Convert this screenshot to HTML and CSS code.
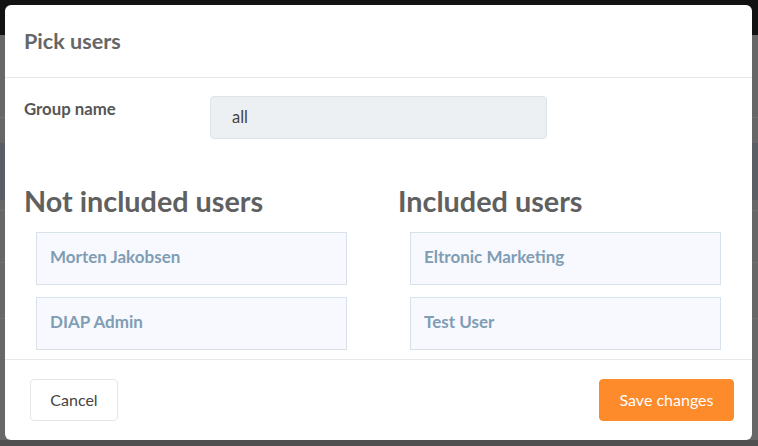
FILE: index.html
```html
<!DOCTYPE html>
<html lang="en">
<head>
<meta charset="utf-8">
<title>Pick users</title>
<link rel="stylesheet" href="styles.css">
</head>
<body>
<div class="backdrop"></div>
<div class="modal">
  <div class="modal-header">
    <h5 class="modal-title">Pick users</h5>
  </div>
  <div class="modal-body">
    <div class="form-row">
      <label class="form-label">Group name</label>
      <div class="form-input">all</div>
    </div>
    <div class="lists">
      <div class="list-col">
        <h2 class="list-title">Not included users</h2>
        <div class="list">
          <div class="user-card">Morten Jakobsen</div>
          <div class="user-card">DIAP Admin</div>
        </div>
      </div>
      <div class="list-col">
        <h2 class="list-title">Included users</h2>
        <div class="list">
          <div class="user-card">Eltronic Marketing</div>
          <div class="user-card">Test User</div>
        </div>
      </div>
    </div>
  </div>
  <div class="modal-footer">
    <button class="btn btn-light">Cancel</button>
    <button class="btn btn-primary">Save changes</button>
  </div>
</div>
</body>
</html>
```

FILE: styles.css
```css
* { box-sizing: border-box; }
html, body {
  margin: 0;
  padding: 0;
  width: 758px;
  height: 446px;
  overflow: hidden;
}
body {
  font-family: "Lato", "Liberation Sans", sans-serif;
  background: #666;
  position: relative;
}
.backdrop {
  width: 758px;
  height: 446px;
  background: linear-gradient(to bottom,
    #121212 0, #121212 35px,
    #676767 35px, #676767 117px,
    #737373 117px, #737373 118px,
    #676767 118px, #676767 143px,
    #5a5f66 143px, #5a5f66 200px,
    #676767 200px, #676767 210px,
    #707070 210px, #707070 211px,
    #676767 211px, #676767 262px,
    #707070 262px, #707070 263px,
    #676767 263px, #676767 318px,
    #707070 318px, #707070 319px,
    #676767 319px, #676767 440px,
    #505050 440px);
}
.modal {
  position: absolute;
  left: 5px;
  top: 5px;
  width: 747px;
  height: 435px;
  background: #fff;
  border-radius: 6px;
  display: flex;
  flex-direction: column;
  overflow: hidden;
}
.modal-header {
  height: 73px;
  padding: 22px 19px 0;
  border-bottom: 1px solid #e6e9ec;
  flex: none;
}
.modal-title {
  margin: 0;
  font-size: 21.6px;
  font-weight: 700;
  color: #666;
  line-height: 28px;
}
.modal-body {
  flex: 1;
  padding: 18px 19px 0;
  overflow: hidden;
}
.form-row {
  display: flex;
  align-items: flex-start;
}
.form-label {
  width: 186px;
  padding-top: 3px;
  font-size: 16.8px;
  font-weight: 700;
  color: #555;
  line-height: 20px;
}
.form-input {
  width: 337px;
  height: 43px;
  background: #edf0f2;
  border: 1px solid #dde3e7;
  border-radius: 4px;
  padding: 0 21px;
  font-size: 16.5px;
  line-height: 41px;
  color: #444;
}
.lists {
  display: grid;
  grid-template-columns: 374px 374px;
  margin-top: 44px;
}
.list-title {
  margin: 0 0 13px;
  font-size: 28.8px;
  font-weight: 700;
  color: #606060;
  line-height: 36px;
}
.list {
  display: flex;
  flex-direction: column;
  gap: 12px;
  padding-left: 12px;
}
.user-card {
  width: 311px;
  height: 53px;
  background: #f8f9fe;
  border: 1px solid #d8e2eb;
  padding: 0 13px 4px;
  font-size: 17px;
  font-weight: 700;
  color: #7f9db4;
  line-height: 47px;
}
.modal-footer {
  flex: none;
  height: 81px;
  border-top: 1px solid #e6e9ec;
  display: flex;
  align-items: center;
  justify-content: space-between;
  padding: 0 18px 0 25px;
}
.btn {
  height: 42px;
  border-radius: 4px;
  font-family: inherit;
  font-size: 16px;
  line-height: 40px;
  padding: 0;
  cursor: pointer;
}
.btn-light {
  width: 88px;
  background: #fff;
  border: 1px solid #e3e6e9;
  color: #444;
}
.btn-primary {
  width: 135px;
  background: #fd8a2b;
  border: 1px solid #fd8a2b;
  color: #fff;
}
```
